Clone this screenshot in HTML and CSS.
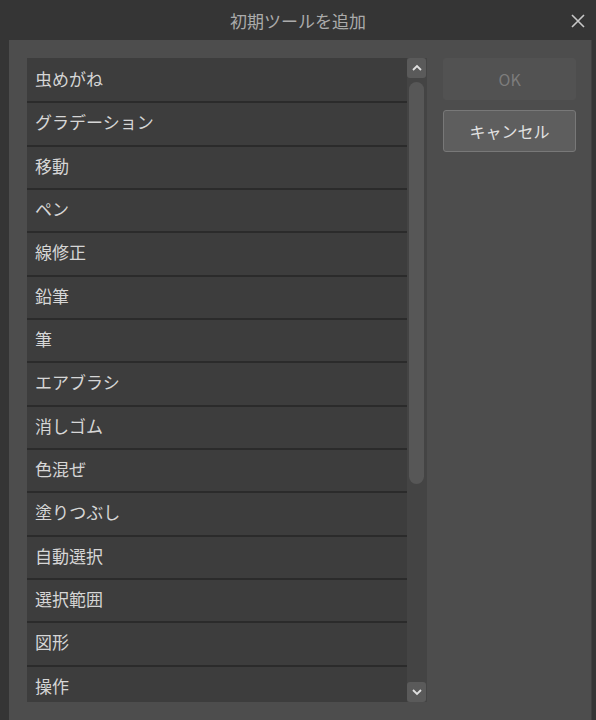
FILE: index.html
```html
<!DOCTYPE html>
<html lang="ja">
<head>
<meta charset="utf-8">
<link rel="stylesheet" href="styles.css">
</head>
<body>
<div class="dialog">
  <div class="titlebar">
    <span class="title">初期ツールを追加</span>
    <span class="close">
      <svg width="16" height="16" viewBox="0 0 16 16"><path d="M2 2 L14 14 M14 2 L2 14" stroke="#c8c8c8" stroke-width="1.6" fill="none"/></svg>
    </span>
  </div>
  <div class="panel">
    <div class="listbox">
      <ul class="list">
        <li>虫めがね</li>
        <li>グラデーション</li>
        <li>移動</li>
        <li>ペン</li>
        <li>線修正</li>
        <li>鉛筆</li>
        <li>筆</li>
        <li>エアブラシ</li>
        <li>消しゴム</li>
        <li>色混ぜ</li>
        <li>塗りつぶし</li>
        <li>自動選択</li>
        <li>選択範囲</li>
        <li>図形</li>
        <li>操作</li>
      </ul>
      <div class="scrollbar">
        <div class="sbtn">
          <svg width="12" height="8" viewBox="0 0 12 8"><path d="M2 6 L6 2 L10 6" stroke="#e0e0e0" stroke-width="1.8" fill="none"/></svg>
        </div>
        <div class="track"><div class="thumb"></div></div>
        <div class="sbtn">
          <svg width="12" height="8" viewBox="0 0 12 8"><path d="M2 2 L6 6 L10 2" stroke="#e0e0e0" stroke-width="1.8" fill="none"/></svg>
        </div>
      </div>
    </div>
    <div class="buttons">
      <div class="btn disabled">OK</div>
      <div class="btn">キャンセル</div>
    </div>
  </div>
</div>
</body>
</html>
```
FILE: styles.css
```css
html, body {
  margin: 0;
  padding: 0;
  background: #353535;
  font-family: "Noto Sans CJK JP", "Noto Sans", sans-serif;
}
.dialog {
  width: 596px;
  height: 720px;
  display: flex;
  flex-direction: column;
  overflow: hidden;
}
.titlebar {
  height: 40px;
  display: flex;
  align-items: center;
  justify-content: center;
  position: relative;
  background: #353535;
}
.title {
  color: #ababab;
  font-size: 17px;
}
.close {
  position: absolute;
  right: 10px;
  top: 10px;
  width: 16px;
  height: 16px;
}
.panel {
  flex: 1;
  margin: 0 4px 0 9px;
  background: #4d4d4d;
  display: flex;
  padding: 18px 15px 0 18px;
  gap: 16px;
  border-right: 1px solid #404040;
}
.listbox {
  display: flex;
  height: 644px;
  width: 401px;
  background: #424242;
}
.list {
  list-style: none;
  margin: 0;
  padding: 2px 0 0;
  width: 380px;
  overflow: hidden;
  background: #3d3d3d;
}
.list li {
  height: 41.33px;
  border-bottom: 2px solid #2b2b2b;
  background: #3d3d3d;
  color: #d6d6d6;
  font-size: 17px;
  line-height: 37px;
  padding-left: 8px;
}
.scrollbar {
  width: 20px;
  display: flex;
  flex-direction: column;
  background: #444444;
}
.sbtn {
  height: 20px;
  width: 19px;
  background: #5a5a5a;
  border-radius: 3px;
  display: flex;
  align-items: center;
  justify-content: center;
}
.track {
  flex: 1;
  padding: 4px 2px;
}
.thumb {
  width: 15px;
  height: 402px;
  background: #575757;
  border-radius: 8px;
}
.buttons {
  display: flex;
  flex-direction: column;
  gap: 10px;
  width: 133px;
}
.btn {
  height: 40px;
  border: 1px solid #787878;
  border-radius: 3px;
  background: #5e5e5e;
  color: #e2e2e2;
  font-size: 16px;
  display: flex;
  align-items: center;
  justify-content: center;
}
.btn.disabled {
  border-color: #525252;
  background: #525252;
  color: #7c7c7c;
}
```
